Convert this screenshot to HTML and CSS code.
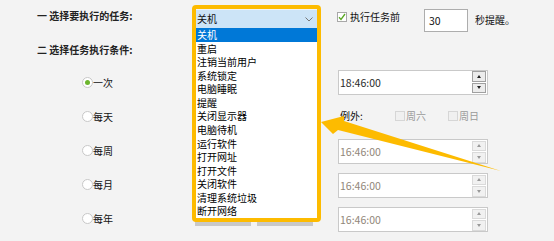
FILE: index.html
```html
<!DOCTYPE html>
<html lang="zh-CN">
<head>
  <meta charset="utf-8">
  <title>定时任务</title>
  <meta name="viewport" content="width=device-width, initial-scale=1.0">
  <link rel="stylesheet" href="styles.css">
</head>
<body>
  <main class="page">
    <div class="task-row">
      <span class="step step-task">一 选择要执行的任务:</span>

      <div class="task-select">
        <div class="select-face">
          关机
          <svg class="chevron" width="8" height="5" viewBox="0 0 8 5"><path d="M0.5 0.5 L4 4 L7.5 0.5" fill="none" stroke="#777" stroke-width="1"/></svg>
        </div>
        <ul class="dropdown-list">
          <li class="active">关机</li>
          <li>重启</li>
          <li>注销当前用户</li>
          <li>系统锁定</li>
          <li>电脑睡眠</li>
          <li>提醒</li>
          <li>关闭显示器</li>
          <li>电脑待机</li>
          <li>运行软件</li>
          <li>打开网址</li>
          <li>打开文件</li>
          <li>关闭软件</li>
          <li>清理系统垃圾</li>
          <li>断开网络</li>
        </ul>
        <div class="highlight"></div>
      </div>

      <label class="check remind">
        <span class="box"><svg width="8" height="8" viewBox="0 0 8 8"><path d="M1 4.2 L3 6.4 L7 1" fill="none" stroke="#5aa822" stroke-width="1.3"/></svg></span>
        执行任务前
      </label>
      <span class="num-input">30</span>
      <span class="suffix">秒提醒。</span>
    </div>

    <div class="cond-row">
      <span class="step">二 选择任务执行条件:</span>
    </div>

    <div class="options">
      <label class="opt"><span class="radio on"></span>一次</label>
      <div></div>
      <div class="time">
        <span class="time-text">18:46:00</span>
        <span class="spin"><span class="up"></span><span class="down"></span></span>
      </div>

      <label class="opt"><span class="radio"></span>每天</label>
      <div></div>
      <div class="except">
        <span class="except-label">例外:</span>
        <span class="check off sat"><span class="box"></span>周六</span>
        <span class="check off"><span class="box"></span>周日</span>
      </div>

      <label class="opt"><span class="radio"></span>每周</label>
      <div></div>
      <div class="time disabled">
        <span class="time-text">16:46:00</span>
        <span class="spin"><span class="up"></span><span class="down"></span></span>
      </div>

      <label class="opt"><span class="radio"></span>每月</label>
      <div></div>
      <div class="time disabled">
        <span class="time-text">16:46:00</span>
        <span class="spin"><span class="up"></span><span class="down"></span></span>
      </div>

      <label class="opt"><span class="radio"></span>每年</label>
      <div class="buttons"><span class="btn"></span><span class="btn wide"></span></div>
      <div class="time disabled">
        <span class="time-text">16:46:00</span>
        <span class="spin"><span class="up"></span><span class="down"></span></span>
      </div>
    </div>

    <svg class="arrow" width="554" height="241" viewBox="0 0 554 241">
      <polygon points="321,122 344,116 344,121 501,171 338,130 333,134" fill="#fdbb00"/>
    </svg>
  </main>
</body>
</html>
```

FILE: styles.css
```css
html {
  box-sizing: border-box;
}

*, *:before, *:after {
  box-sizing: inherit;
}

body {
  margin: 0;
  background: #f3f3f3;
  color: #111;
  font-family: "Noto Sans CJK SC", "Noto Sans", sans-serif;
  font-size: 10px;
}

.page {
  position: relative;
  width: 554px;
  height: 241px;
  overflow: hidden;
}

/* header row */
.task-row {
  display: flex;
  align-items: flex-start;
  padding-top: 9px;
  height: 33px;
}

.step {
  line-height: 14px;
  font-weight: 700;
  color: #222;
  margin-left: 37px;
}

.step-task {
  width: 159px;
}

.task-select {
  position: relative;
  width: 122px;
  height: 18px;
  margin-top: 1px;
  z-index: 2;
}

.select-face {
  display: flex;
  align-items: center;
  justify-content: space-between;
  height: 18px;
  padding: 0 5px 0 1px;
  background: #cce4f7;
  line-height: 18px;
}

.dropdown-list {
  position: absolute;
  top: 18px;
  left: 0;
  width: 121px;
  margin: 0;
  padding: 0;
  list-style: none;
  background: #fff;
}

.dropdown-list li {
  height: 13.57px;
  line-height: 13.57px;
  padding-left: 1px;
  color: #000;
}

.dropdown-list li.active {
  background: #0078d7;
  color: #fff;
}

.highlight {
  position: absolute;
  left: -4px;
  top: -5px;
  width: 129px;
  height: 217px;
  border: 4px solid #fdbb00;
  border-radius: 4px;
  pointer-events: none;
}

.check {
  display: flex;
  align-items: center;
  line-height: 14px;
}

.check .box {
  display: flex;
  align-items: center;
  justify-content: center;
  width: 10px;
  height: 10px;
  margin-right: 3px;
  border: 1px solid #a8a8a8;
  background: #fff;
}

.remind {
  width: 62px;
  margin: 1px 0 0 19px;
  white-space: nowrap;
}

.num-input {
  width: 44px;
  height: 23px;
  margin-left: 25px;
  padding-left: 4px;
  border: 1px solid #adadad;
  background: #fff;
  line-height: 21px;
  font-size: 10.5px;
}

.suffix {
  margin: 4px 0 0 7px;
  line-height: 14px;
}

.cond-row {
  margin-top: 9px;
  height: 14px;
}

/* condition grid */
.options {
  display: grid;
  grid-template-columns: 114px 142px 150px;
  grid-auto-rows: 34px;
  align-items: center;
  margin-top: 9px;
  padding-left: 82px;
}

.opt {
  display: flex;
  align-items: center;
  line-height: 14px;
  margin-top: 1px;
}

.radio {
  display: flex;
  align-items: center;
  justify-content: center;
  width: 11px;
  height: 11px;
  border: 1px solid #c8c8c8;
  border-radius: 50%;
  background: #fff;
}

.radio.on:after {
  content: "";
  width: 5px;
  height: 5px;
  border-radius: 50%;
  background: #6cb52d;
}

.time {
  display: flex;
  align-items: center;
  height: 25px;
  border: 1px solid #c9c9c9;
  background: #fff;
}

.time-text {
  flex: 1;
  padding-left: 1px;
  font-size: 10.5px;
  color: #2a2a2a;
}

.time.disabled {
  margin-top: 3px;
}

.time.disabled .time-text {
  color: #918679;
}

.spin {
  display: flex;
  flex-direction: column;
  gap: 1px;
  width: 14px;
  margin-right: 1px;
}

.spin span {
  display: flex;
  align-items: center;
  justify-content: center;
  height: 10.5px;
  border: 1px solid #a0a0a0;
  background: #ececec;
}

.time.disabled .spin span {
  border-color: #dadada;
  background: #f1f1f1;
}

.spin .up:after,
.spin .down:after {
  content: "";
  border-left: 2.5px solid transparent;
  border-right: 2.5px solid transparent;
}

.spin .up:after {
  border-bottom: 3px solid #222;
}

.spin .down:after {
  border-top: 3px solid #222;
}

.time.disabled .spin .up:after {
  border-bottom-color: #999;
}

.time.disabled .spin .down:after {
  border-top-color: #999;
}

.except {
  display: flex;
  align-items: center;
  line-height: 14px;
}

.except-label {
  width: 57px;
  padding-left: 2px;
}

.check.off {
  color: #9a9a9a;
}

.check.off .box {
  border-color: #d6d6d6;
  background: #f0f0f0;
  margin-right: 1px;
}

.sat {
  width: 53px;
}

.buttons {
  display: flex;
  gap: 6px;
  align-self: start;
  margin: 11px 0 0 -1px;
}

.btn {
  width: 56px;
  height: 14px;
  background: #c8c8c8;
}

.btn.wide {
  width: 56px;
}

.arrow {
  position: absolute;
  left: 0;
  top: 0;
  pointer-events: none;
  z-index: 3;
}
```
